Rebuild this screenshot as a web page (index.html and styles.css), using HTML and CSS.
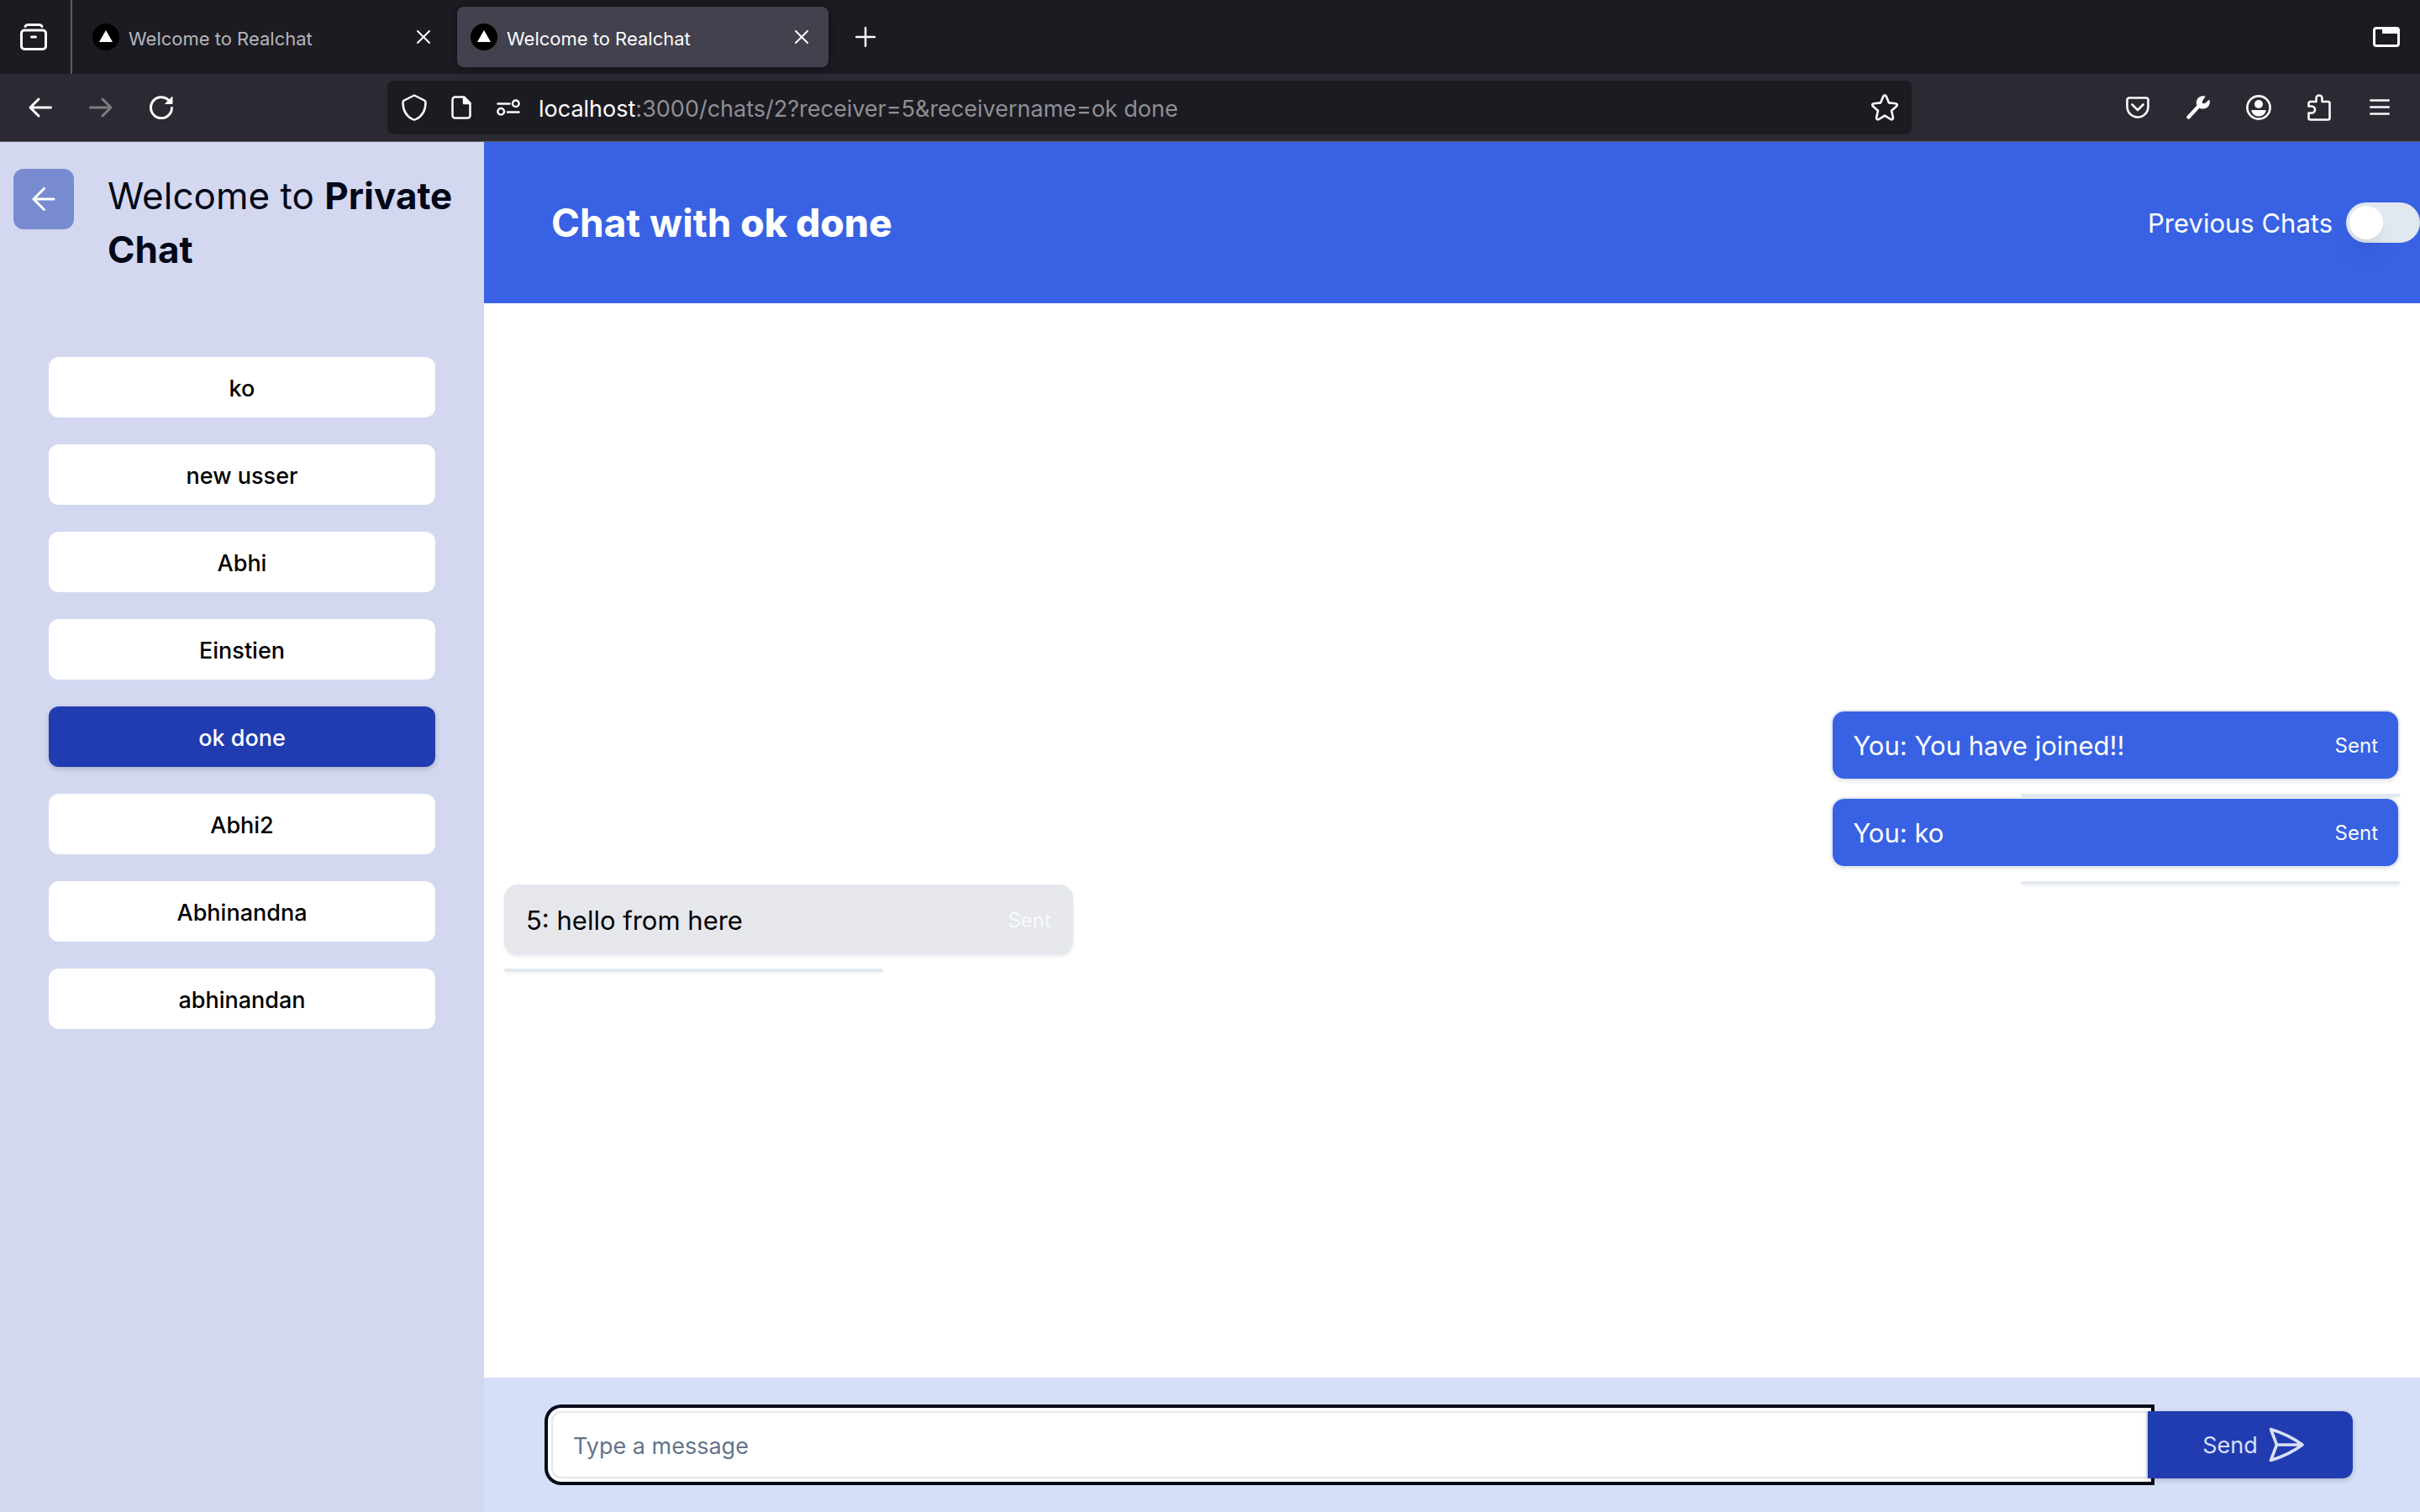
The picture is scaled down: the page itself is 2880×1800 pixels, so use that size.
FILE: index.html
```html
<!DOCTYPE html>
<html lang="en">
<head>
<meta charset="utf-8">
<title>Welcome to Realchat</title>
<link rel="stylesheet" href="styles.css">
</head>
<body>
<div class="window">
  <div class="tabbar">
    <button class="tool tool-view" aria-label="Firefox View"><svg width="32" height="34" viewBox="0 0 32 34" fill="none" stroke="currentColor" stroke-width="3" stroke-linecap="round"><path d="M6 4.500Q7 2.500 9 2.500H23Q25 2.500 26 4.500"/><rect x="1.500" y="9" width="29" height="22.500" rx="3.500"/><path d="M13.500 17h5"/></svg></button>
    <div class="tabs">
      <div class="tab">
        <svg class="favicon" viewBox="0 0 32 32"><circle cx="16" cy="16" r="16"/><path d="M16 8l8 14H8z" fill="#fff"/></svg>
        <span class="tab-title">Welcome to Realchat</span>
        <button class="tab-close" aria-label="Close tab"><svg width="16" height="16" viewBox="0 0 16 16" stroke="currentColor" stroke-width="2" stroke-linecap="round"><path d="M1 1l14 14M15 1L1 15"/></svg></button>
      </div>
      <div class="tab tab-active">
        <svg class="favicon" viewBox="0 0 32 32"><circle cx="16" cy="16" r="16"/><path d="M16 8l8 14H8z" fill="#fff"/></svg>
        <span class="tab-title">Welcome to Realchat</span>
        <button class="tab-close" aria-label="Close tab"><svg width="16" height="16" viewBox="0 0 16 16" stroke="currentColor" stroke-width="2" stroke-linecap="round"><path d="M1 1l14 14M15 1L1 15"/></svg></button>
      </div>
    </div>
    <button class="tool" aria-label="New tab"><svg width="24" height="24" viewBox="0 0 24 24" stroke="currentColor" stroke-width="2.500" stroke-linecap="round"><path d="M12 1v22M1 12h22"/></svg></button>
    <button class="tool tool-end" aria-label="List all tabs"><svg width="32" height="24" viewBox="0 0 32 24"><path fill="currentColor" fill-rule="evenodd" d="M4 0h24a4 4 0 0 1 4 4v16a4 4 0 0 1-4 4H4a4 4 0 0 1-4-4V4a4 4 0 0 1 4-4zM4 3a1 1 0 0 0-1 1v16a1 1 0 0 0 1 1h24a1 1 0 0 0 1-1V8H11V3z"/></svg></button>
  </div>
  <div class="toolbar">
    <div class="tools">
      <button class="tool" aria-label="Back"><svg width="28" height="24" viewBox="0 0 28 24" fill="none" stroke="currentColor" stroke-width="3" stroke-linecap="round" stroke-linejoin="round"><path d="M26.500 12H2M12 2L2 12l10 10"/></svg></button>
      <button class="tool" aria-label="Forward" disabled><svg width="28" height="24" viewBox="0 0 28 24" fill="none" stroke="currentColor" stroke-width="3" stroke-linecap="round" stroke-linejoin="round"><path d="M1.500 12H26M16 2l10 10-10 10"/></svg></button>
      <button class="tool" aria-label="Reload"><svg width="28" height="28" viewBox="0 0 28 28" fill="none" stroke="currentColor" stroke-width="3" stroke-linecap="round"><path d="M26.500 14.500A12.500 12.500 0 1 1 22.500 5"/><path d="M27 1.500V9.500H19z" fill="currentColor" stroke-width="1" stroke-linejoin="round"/></svg></button>
    </div>
    <div class="urlbar">
      <button class="urlbar-tool" aria-label="Tracking protection"><svg width="30" height="32" viewBox="0 0 30 32" fill="none" stroke="currentColor" stroke-width="2.500" stroke-linejoin="round"><path d="M15 1.500L27 7.500Q28.500 8.200 28.500 10C28.500 19 25 26 17 30Q15 31 13 30C5 26 1.500 19 1.500 10Q1.500 8.200 3 7.500z"/></svg></button>
      <button class="urlbar-tool" aria-label="Site information"><svg width="24" height="28" viewBox="0 0 24 28" fill="none" stroke="currentColor" stroke-width="2.500" stroke-linejoin="round"><path d="M4.500 1.500H15L22.500 9V23.500a3 3 0 0 1-3 3h-15a3 3 0 0 1-3-3v-19a3 3 0 0 1 3-3z"/><path d="M15 1.500V9h7.500z" fill="currentColor"/></svg></button>
      <button class="urlbar-tool" aria-label="Permissions"><svg width="28" height="20" viewBox="0 0 28 20" fill="none" stroke="currentColor" stroke-width="2.500" stroke-linecap="round"><path d="M1.500 5.500h14M13 15.500h13.500"/><circle cx="22.800" cy="5.200" r="3.800"/><circle cx="5.200" cy="14.800" r="3.800"/></svg></button>
      <div class="url"><span class="url-host">localhost</span>:3000/chats/2?receiver=5&amp;receivername=ok done</div>
      <button class="urlbar-tool" aria-label="Bookmark this page"><svg width="32" height="32" viewBox="0 0 32 32" fill="none" stroke="currentColor" stroke-width="2.600" stroke-linejoin="round"><path d="M14.200 2.800Q16 0 17.800 2.800L21 10.400 29 11.200Q32 12 30 14.500L24 19.800 25.800 27.600Q26 31 23 30L16 25.600 9 30Q6 31 6.200 27.600L8 19.800 2 14.500Q0 12 3 11.200L11 10.400z"/></svg></button>
    </div>
    <div class="tools">
      <button class="tool" aria-label="Save to Pocket"><svg width="28" height="26" viewBox="0 0 28 26" fill="none" stroke="currentColor" stroke-width="2.600" stroke-linecap="round" stroke-linejoin="round"><path d="M4 1.500H24a2.500 2.500 0 0 1 2.500 2.500V12a12.500 12.500 0 0 1-25 0V4A2.500 2.500 0 0 1 4 1.500z"/><path d="M7.500 9.500L14 16l6.500-6.500"/></svg></button>
      <button class="tool" aria-label="Developer tools"><svg width="28" height="28" viewBox="0 0 28 28"><path d="M2.500 25.500L15 12" stroke="currentColor" stroke-width="4.400" stroke-linecap="round"/><path fill="currentColor" d="M21.500 .3L22.500 1 19 6.200V9h3.200L27.300 4.500C29 9 26.500 14.600 21 15.400 14.500 16.200 11 11.500 12 6.500 13 2 17-.500 21.500 .3z"/></svg></button>
      <button class="tool" aria-label="Account"><svg width="30" height="30" viewBox="0 0 30 30"><circle cx="15" cy="15" r="13.600" fill="none" stroke="currentColor" stroke-width="2.600"/><circle cx="15" cy="11" r="5" fill="currentColor"/><path fill="currentColor" d="M7 18h16q1 0 .500 1.500a9 9 0 0 1-17 0Q6 18 7 18z"/></svg></button>
      <button class="tool" aria-label="Extensions"><svg width="28" height="32" viewBox="0 0 28 32" fill="none" stroke="currentColor" stroke-width="2.600" stroke-linejoin="round"><path d="M10.500 9V5a3.500 3.500 0 0 1 7 0V9H24.500a2 2 0 0 1 2 2V28.500a2 2 0 0 1-2 2H3.500a2 2 0 0 1-2-2V22.500H5a4 4 0 0 0 0-8H1.500V11a2 2 0 0 1 2-2z"/></svg></button>
      <button class="tool" aria-label="Menu"><svg width="24" height="20" viewBox="0 0 24 20" stroke="currentColor" stroke-width="2.600" stroke-linecap="round"><path d="M1.300 1.500h21.400M1.300 9.500h21.400M1.300 17.500h21.400"/></svg></button>
    </div>
  </div>

  <div class="app">
    <aside class="sidebar">
      <div class="sidebar-head">
        <button class="back" aria-label="Go back"><svg width="28" height="28" viewBox="0 0 28 28" fill="none" stroke="currentColor" stroke-width="3" stroke-linecap="round" stroke-linejoin="round"><path d="M26 14H2M14.500 1.500L2 14l12.500 12.500"/></svg></button>
        <h1 class="sidebar-title">Welcome to <b>Private</b> <b>Chat</b></h1>
      </div>
      <nav class="users">
        <button class="user">ko</button>
        <button class="user">new usser</button>
        <button class="user">Abhi</button>
        <button class="user">Einstien</button>
        <button class="user user-active">ok done</button>
        <button class="user">Abhi2</button>
        <button class="user">Abhinandna</button>
        <button class="user">abhinandan</button>
      </nav>
    </aside>
    <main class="chat">
      <header class="chat-head">
        <h2 class="chat-title">Chat with <b>ok done</b></h2>
        <label class="history">Previous Chats <input class="switch" type="checkbox" role="switch"></label>
      </header>
      <section class="messages">
        <div class="message message-own"><p class="bubble">You: You have joined!! <small class="status">Sent</small></p><hr class="rule"></div>
        <div class="message message-own"><p class="bubble">You: ko <small class="status">Sent</small></p><hr class="rule"></div>
        <div class="message"><p class="bubble">5: hello from here <small class="status">Sent</small></p><hr class="rule"></div>
      </section>
      <form class="composer">
        <input class="composer-input" type="text" placeholder="Type a message" aria-label="Message">
        <button class="composer-send" type="button">Send <svg width="44" height="44" viewBox="0 0 44 44" fill="none" stroke="currentColor" stroke-width="3.600" stroke-linecap="round" stroke-linejoin="round"><path d="M10.500 22L3.500 3.500Q25 10 41 22 25 34 3.500 40.500z"/><path d="M10.500 22H40"/></svg></button>
      </form>
    </main>
  </div>
</div>
</body>
</html>
```
FILE: styles.css
```css
* { box-sizing: border-box; }

body {
  margin: 0;
  font-family: Inter, "Liberation Sans", sans-serif;
  color: #020817;
}

button, input { font: inherit; color: inherit; }

button {
  display: flex;
  align-items: center;
  justify-content: center;
  padding: 0;
  border: 0;
  background: none;
}

svg { display: block; flex: none; }

h1, h2, p { margin: 0; }

.window {
  display: flex;
  flex-direction: column;
  min-height: 100vh;
}

/* Browser frame */
.tabbar {
  display: flex;
  align-items: center;
  height: 88px;
  padding-right: 8px;
  background: #1c1b22;
  color: #fbfbfe;
}

.tool { width: 64px; height: 64px; }
.tool:disabled { color: #7d7c82; }
.tool-end { margin-left: auto; }

.tool-view {
  width: 86px;
  height: 100%;
  padding-right: 4px;
  border-right: 2px solid #5b5b66;
}

.tabs {
  display: flex;
  gap: 8px;
  padding: 0 12px 0 8px;
}

.tab {
  display: flex;
  align-items: center;
  gap: 11px;
  width: 442px;
  height: 72px;
  padding: 0 24px 0 16px;
  border-radius: 8px;
  font-size: 22px;
  color: #b5b5ba;
}

.tab-active {
  background: #42414d;
  box-shadow: 0 0 8px rgba(0, 0, 0, 0.4);
  color: #fbfbfe;
}

.favicon { width: 32px; height: 32px; }
.tab-title { flex: 1; padding-top: 4px; }
.tab-close { color: #fbfbfe; }

.toolbar {
  display: flex;
  align-items: center;
  height: 81px;
  padding: 0 16px;
  border-bottom: 1px solid #5b5b66;
  background: #2b2a33;
  color: #fbfbfe;
}

.tools { display: flex; gap: 8px; }

.urlbar {
  display: flex;
  flex: 1;
  align-items: center;
  height: 64px;
  margin: 0 237px;
  padding: 0 4px;
  border-radius: 8px;
  background: #1c1b22;
}

.urlbar-tool { width: 56px; height: 56px; }

.url {
  flex: 1;
  padding: 2px 0 0 8px;
  font-size: 27px;
  color: #8f8f94;
}

.url-host { color: #fbfbfe; }

/* Chat page */
.app {
  display: flex;
  flex: 1;
}

.sidebar {
  width: 20%;
  background: #d3d8f0;
}

.sidebar-head {
  display: flex;
  align-items: flex-start;
  gap: 40px;
  padding: 32px 16px 0;
}

.back {
  flex: none;
  width: 72px;
  height: 72px;
  border-radius: 12px;
  background: #798bd0;
  color: #fff;
}

.sidebar-title {
  font-size: 44px;
  line-height: 64px;
  font-weight: 400;
}

.sidebar-title b { font-weight: 700; }

.users {
  display: flex;
  flex-direction: column;
  gap: 32px;
  padding: 96px 10% 32px;
}

.user {
  height: 72px;
  padding-top: 2px;
  border-radius: 12px;
  background: #fff;
  font-size: 27px;
  font-weight: 500;
  color: #000;
}

.user-active {
  background: #203cb0;
  box-shadow: 0 2px 6px rgba(0, 0, 0, 0.2);
  color: #fff;
}

.chat {
  display: flex;
  flex: 1;
  flex-direction: column;
  background: #fff;
}

.chat-head {
  display: flex;
  align-items: center;
  justify-content: space-between;
  height: 192px;
  padding-left: 80px;
  background: #3862e3;
  color: #fff;
}

.chat-title {
  font-size: 46px;
  line-height: 64px;
  font-weight: 700;
}

.chat-title b { font-weight: 800; }

.history {
  display: flex;
  align-items: center;
  gap: 16px;
  font-size: 31px;
}

.switch {
  display: flex;
  align-items: center;
  width: 88px;
  height: 48px;
  margin: 0;
  padding: 4px;
  border-radius: 24px;
  background: #e2e8f0;
  appearance: none;
}

.switch::before {
  content: "";
  width: 40px;
  height: 40px;
  border-radius: 50%;
  background: #fff;
  box-shadow: 0 20px 30px -6px rgba(0, 0, 0, 0.1), 0 8px 12px -8px rgba(0, 0, 0, 0.1);
}

.switch:checked { justify-content: flex-end; background: #020817; }

.messages {
  display: flex;
  flex: 1;
  flex-direction: column;
  justify-content: center;
  padding: 0 24px;
}

.message {
  display: flex;
  flex-direction: column;
  gap: 16px;
}

.message-own { align-items: flex-end; }

.bubble {
  display: flex;
  align-items: center;
  justify-content: space-between;
  width: 30%;
  min-height: 84px;
  padding: 2px 24px 0;
  border: 2px solid #e2e8f0;
  border-radius: 16px;
  background: #e5e7eb;
  box-shadow: 0 2px 4px rgba(0, 0, 0, 0.08);
  font-size: 31px;
  color: #000;
}

.message-own .bubble { background: #3862e3; color: #fff; }

.status { font-size: 24px; color: #f8fafc; }

.rule {
  width: 20%;
  height: 4px;
  margin: 0;
  border: 0;
  border-radius: 2px;
  background: #e2e8f0;
  box-shadow: 0 2px 4px rgba(0, 0, 0, 0.06);
}

.composer {
  display: flex;
  padding: 40px 80px;
  background: #d5e0f8;
}

.composer-input {
  flex: 1;
  height: 80px;
  padding: 2px 24px 0;
  border: 2px solid #e2e8f0;
  border-radius: 12px 0 0 12px;
  outline: 0;
  background: #fff;
  box-shadow: 0 0 0 4px #fff, 0 0 0 8px #020817;
  font-size: 27px;
}

.composer-input::placeholder { color: #64748b; opacity: 1; }

.composer-send {
  gap: 12px;
  width: 244px;
  height: 80px;
  padding-left: 8px;
  border-radius: 0 12px 12px 0;
  background: #203cb0;
  box-shadow: 0 2px 6px rgba(0, 0, 0, 0.2);
  font-size: 27px;
  color: #d9dff5;
}
```
